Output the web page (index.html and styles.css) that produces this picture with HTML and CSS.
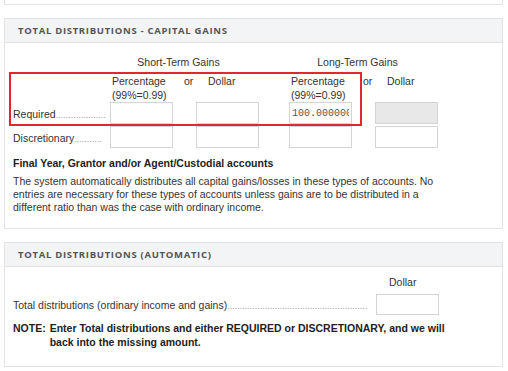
FILE: index.html
```html
<!DOCTYPE html>
<html lang="en">
<head>
    <meta charset="UTF-8">
    <meta name="viewport" content="width=device-width, initial-scale=1.0">
    <title>Total Distributions</title>
    <link rel="stylesheet" href="styles.css">
</head>
<body>

    <div class="panel-stub"></div>

    <div class="panel">
        <div class="panel-heading">Total Distributions - Capital Gains</div>
        <div class="panel-body">
            <div class="gains-wrap">
                <table class="gains">
                    <colgroup>
                        <col class="c-label">
                        <col class="c-input">
                        <col class="c-or">
                        <col class="c-input">
                        <col class="c-space">
                        <col class="c-input">
                        <col class="c-or">
                        <col class="c-input">
                    </colgroup>
                    <tr class="group-row">
                        <td></td>
                        <td colspan="3" class="group">Short-Term Gains</td>
                        <td></td>
                        <td colspan="3" class="group">Long-Term Gains</td>
                    </tr>
                    <tr class="head-row">
                        <td></td>
                        <td class="pct">Percentage<br>(99%=0.99)</td>
                        <td class="or">or</td>
                        <td class="dollar">Dollar</td>
                        <td></td>
                        <td class="pct">Percentage<br>(99%=0.99)</td>
                        <td class="or">or</td>
                        <td class="dollar">Dollar</td>
                    </tr>
                    <tr>
                        <td class="label">Required<span class="dots">....................</span></td>
                        <td><input type="text" class="field"></td>
                        <td></td>
                        <td><input type="text" class="field"></td>
                        <td></td>
                        <td><input type="text" class="field mono" value="100.0000000"></td>
                        <td></td>
                        <td><input type="text" class="field" disabled></td>
                    </tr>
                    <tr>
                        <td class="label">Discretionary<span class="dots">...........</span></td>
                        <td><input type="text" class="field"></td>
                        <td></td>
                        <td><input type="text" class="field"></td>
                        <td></td>
                        <td><input type="text" class="field"></td>
                        <td></td>
                        <td><input type="text" class="field"></td>
                    </tr>
                </table>
                <div class="highlight"></div>
            </div>

            <h4 class="subhead">Final Year, Grantor and/or Agent/Custodial accounts</h4>
            <p class="note-text">The system automatically distributes all capital gains/losses in these types of accounts. No entries are necessary for these types of accounts unless gains are to be distributed in a different ratio than was the case with ordinary income.</p>
        </div>
    </div>

    <div class="panel">
        <div class="panel-heading">Total Distributions (Automatic)</div>
        <div class="panel-body panel-body-tight">
            <div class="total-head">Dollar</div>
            <div class="total-row">
                <span class="total-label">Total distributions (ordinary income and gains)<span class="dots">........................................................</span></span>
                <input type="text" class="field">
            </div>
            <div class="warning">
                <span class="warning-tag">NOTE:</span>
                <span>Enter Total distributions and either REQUIRED or DISCRETIONARY, and we will back into the missing amount.</span>
            </div>
        </div>
    </div>

</body>
</html>
```

FILE: styles.css
```css
body {
    margin: 0;
    padding: 0 5px 0 4px;
    background-color: #fff;
    font-family: "Liberation Sans", Arial, sans-serif;
    font-size: 10.5px;
    color: #333;
}

.panel-stub {
    height: 4px;
    border: 1px solid #e3e3e3;
    border-top: none;
}

.panel {
    margin-top: 13px;
    border: 1px solid #e3e3e3;
}

.panel-heading {
    height: 23px;
    line-height: 23px;
    padding-left: 13px;
    background-color: #f3f4f6;
    border-bottom: 1px solid #e3e3e3;
    font-family: "Open Sans", sans-serif;
    font-size: 9.5px;
    font-weight: 700;
    letter-spacing: 0.7px;
    text-transform: uppercase;
    color: #555;
}

.panel-body {
    padding: 12px 8px 14px 8px;
}

.panel-body-tight {
    padding-top: 8px;
    padding-bottom: 17px;
}

/* gains grid */
.gains-wrap {
    position: relative;
}

.gains {
    width: 425px;
    border-collapse: collapse;
    table-layout: fixed;
}

.gains td {
    padding: 0;
    vertical-align: top;
    line-height: 14px;
}

.c-label { width: 97px; }
.c-input { width: 63px; }
.c-or { width: 23px; }
.c-space { width: 30px; }

.group-row td {
    height: 16px;
}

.group {
    text-align: center;
    padding-right: 12px !important;
}

.head-row td {
    height: 28px;
    padding-top: 3px;
}

.pct {
    padding-left: 2px !important;
}

.or {
    padding-left: 11px !important;
}

.dollar {
    padding-left: 12px !important;
}

.label {
    white-space: nowrap;
    vertical-align: middle !important;
}

.dots {
    color: #999;
    font-size: 9px;
}

.field {
    display: block;
    box-sizing: border-box;
    width: 63px;
    height: 22px;
    margin: 0 0 2px 0;
    padding: 0 2px;
    border: 1px solid #d4d4d4;
    background-color: #fff;
    font-family: "Liberation Sans", Arial, sans-serif;
    font-size: 10.5px;
    color: #555;
}

.field:disabled {
    background-color: #e8e8e8;
}

.mono {
    font-family: "Liberation Mono", "Courier New", monospace;
    font-size: 10px;
}

.highlight {
    position: absolute;
    left: -4px;
    top: 17px;
    width: 349px;
    height: 50px;
    border: 2px solid #e5262c;
}

.subhead {
    margin: 7px 0 0 0;
    font-size: 10.5px;
    font-weight: 700;
    color: #222;
}

.note-text {
    margin: 6px 0 0 0;
    width: 430px;
    line-height: 13px;
}

/* automatic totals */
.total-head {
    padding-left: 376px;
    line-height: 14px;
}

.total-row {
    display: flex;
    align-items: center;
    margin-top: 5px;
}

.total-row .field {
    height: 21px;
    margin: 0;
}

.total-label {
    width: 356px;
    margin-right: 7px;
    white-space: nowrap;
}

.warning {
    display: flex;
    gap: 4px;
    width: 445px;
    margin-top: 6px;
    font-weight: 700;
    color: #222;
    line-height: 14px;
}

.warning-tag {
    flex: none;
}
```
